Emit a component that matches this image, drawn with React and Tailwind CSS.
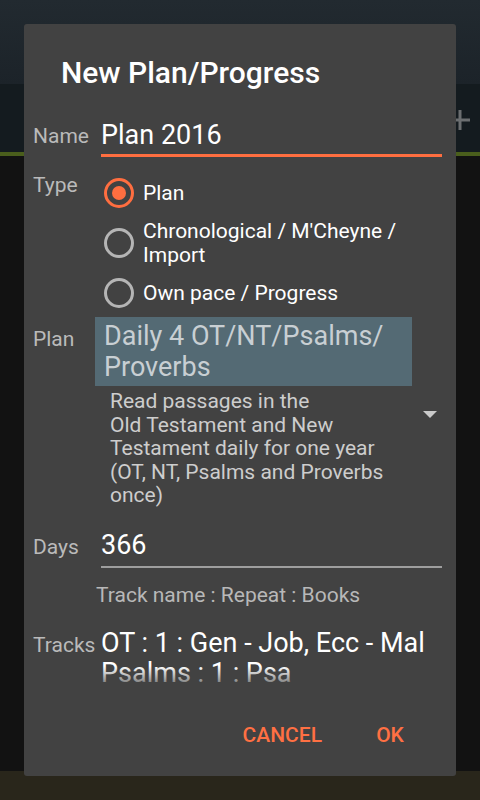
import React from 'react'

const Radio = ({ checked, children }) => (
  <div className="flex items-center min-h-[30px]">
    <div
      className={
        checked
          ? 'ml-[3px] w-[30px] h-[30px] shrink-0 rounded-full border-[3px] border-[#ff6e40] flex items-center justify-center'
          : 'ml-[3px] w-[30px] h-[30px] shrink-0 rounded-full border-[3px] border-[#b5b5b5]'
      }
    >
      {checked && <div className="w-[14px] h-[14px] rounded-full bg-[#ff6e40]" />}
    </div>
    <div className="ml-[9px] text-[21px] leading-[24px] text-white">{children}</div>
  </div>
)

const Label = ({ children, className = '' }) => (
  <div className={'w-[68px] shrink-0 text-[21px] leading-[24px] text-[#bababa] ' + className}>{children}</div>
)

export default function App() {
  return (
    <div className="relative w-[480px] h-[800px] overflow-hidden bg-[#121212] font-['Roboto',sans-serif]">
      {/* screen behind the dialog */}
      <div className="h-[84px] bg-linear-to-b from-[#222a30] to-[#1c2329]" />
      <div className="h-[68px] bg-[#141b1f] flex justify-end pt-[26px] pr-[10px]">
        <svg width="20" height="20" viewBox="0 0 20 20">
          <path d="M10 0v20M0 10h20" stroke="#6b6e70" strokeWidth="3" />
        </svg>
      </div>
      <div className="h-[4px] bg-[#4a5e1c]" />
      <div className="h-[615px]" />
      <div className="h-[29px] bg-[#29261b]" />

      {/* dialog */}
      <div className="absolute left-[24px] top-[24px] w-[432px] h-[752px] rounded-[3px] bg-[#424242] flex flex-col pl-[9px] pr-[14px] pt-[31px] pb-[14px]">
        <div className="ml-[28px] text-[30px] leading-[36px] font-medium text-white">New Plan/Progress</div>

        <div className="mt-[28px] flex items-start">
          <Label className="pt-[5px]">Name</Label>
          <div className="flex-1 text-[27px] leading-[32px] text-white pb-[3px] border-b-[3px] border-[#ff6e40]">
            Plan 2016
          </div>
        </div>

        <div className="mt-[16px] flex items-start">
          <Label>Type</Label>
          <div className="flex-1 pt-[5px] flex flex-col gap-[11px]">
            <Radio checked>Plan</Radio>
            <Radio>
              Chronological / M'Cheyne /<br />Import
            </Radio>
            <Radio>Own pace / Progress</Radio>
          </div>
        </div>

        <div className="mt-[9px] flex items-start">
          <Label className="pt-[10px]">Plan</Label>
          <div className="flex-1 ml-[-6px] flex flex-col">
            <div className="w-[317px] bg-[#546a74] pl-[9px] pt-[4px] pb-[3px] text-[27px] leading-[31px] text-[#c8cfd3]">
              Daily 4 OT/NT/Psalms/
              <br />
              Proverbs
            </div>
            <div className="flex items-start">
              <div className="pl-[15px] pt-[4px] text-[21px] leading-[23.5px] text-[#cdcdcd]">
                Read passages in the
                <br />
                Old Testament and New
                <br />
                Testament daily for one year
                <br />
                (OT, NT, Psalms and Proverbs
                <br />
                once)
              </div>
              <svg className="ml-auto mr-[5px] mt-[25px]" width="14" height="7" viewBox="0 0 14 7">
                <path d="M0 0h14L7 7z" fill="#cacaca" />
              </svg>
            </div>
          </div>
        </div>

        <div className="mt-[21px] flex items-start">
          <Label className="pt-[6px]">Days</Label>
          <div className="flex-1 text-[27px] leading-[32px] text-white pb-[5px] border-b-[2px] border-[#9e9e9e]">366</div>
        </div>

        <div className="mt-[15px] ml-[63px] text-[21px] leading-[24px] text-[#b8b8b8]">Track name : Repeat : Books</div>

        <div className="mt-[21px] flex items-start">
          <Label className="pt-[5px]">Tracks</Label>
          <div className="relative flex-1 h-[64px] overflow-hidden text-[27px] leading-[30px] text-white">
            <div>OT : 1 : Gen - Job, Ecc - Mal</div>
            <div>Psalms : 1 : Psa</div>
            <div className="absolute left-0 right-0 bottom-0 h-[26px] bg-linear-to-b from-[#42424200] to-[#424242]" />
          </div>
        </div>

        <div className="mt-auto flex justify-end gap-[8px] pr-[4px]">
          <div className="px-[12px] h-[54px] leading-[54px] text-[21px] font-medium text-[#ff7043]">CANCEL</div>
          <div className="w-[96px] h-[54px] leading-[54px] text-center text-[21px] font-medium text-[#ff7043]">OK</div>
        </div>
      </div>
    </div>
  )
}
